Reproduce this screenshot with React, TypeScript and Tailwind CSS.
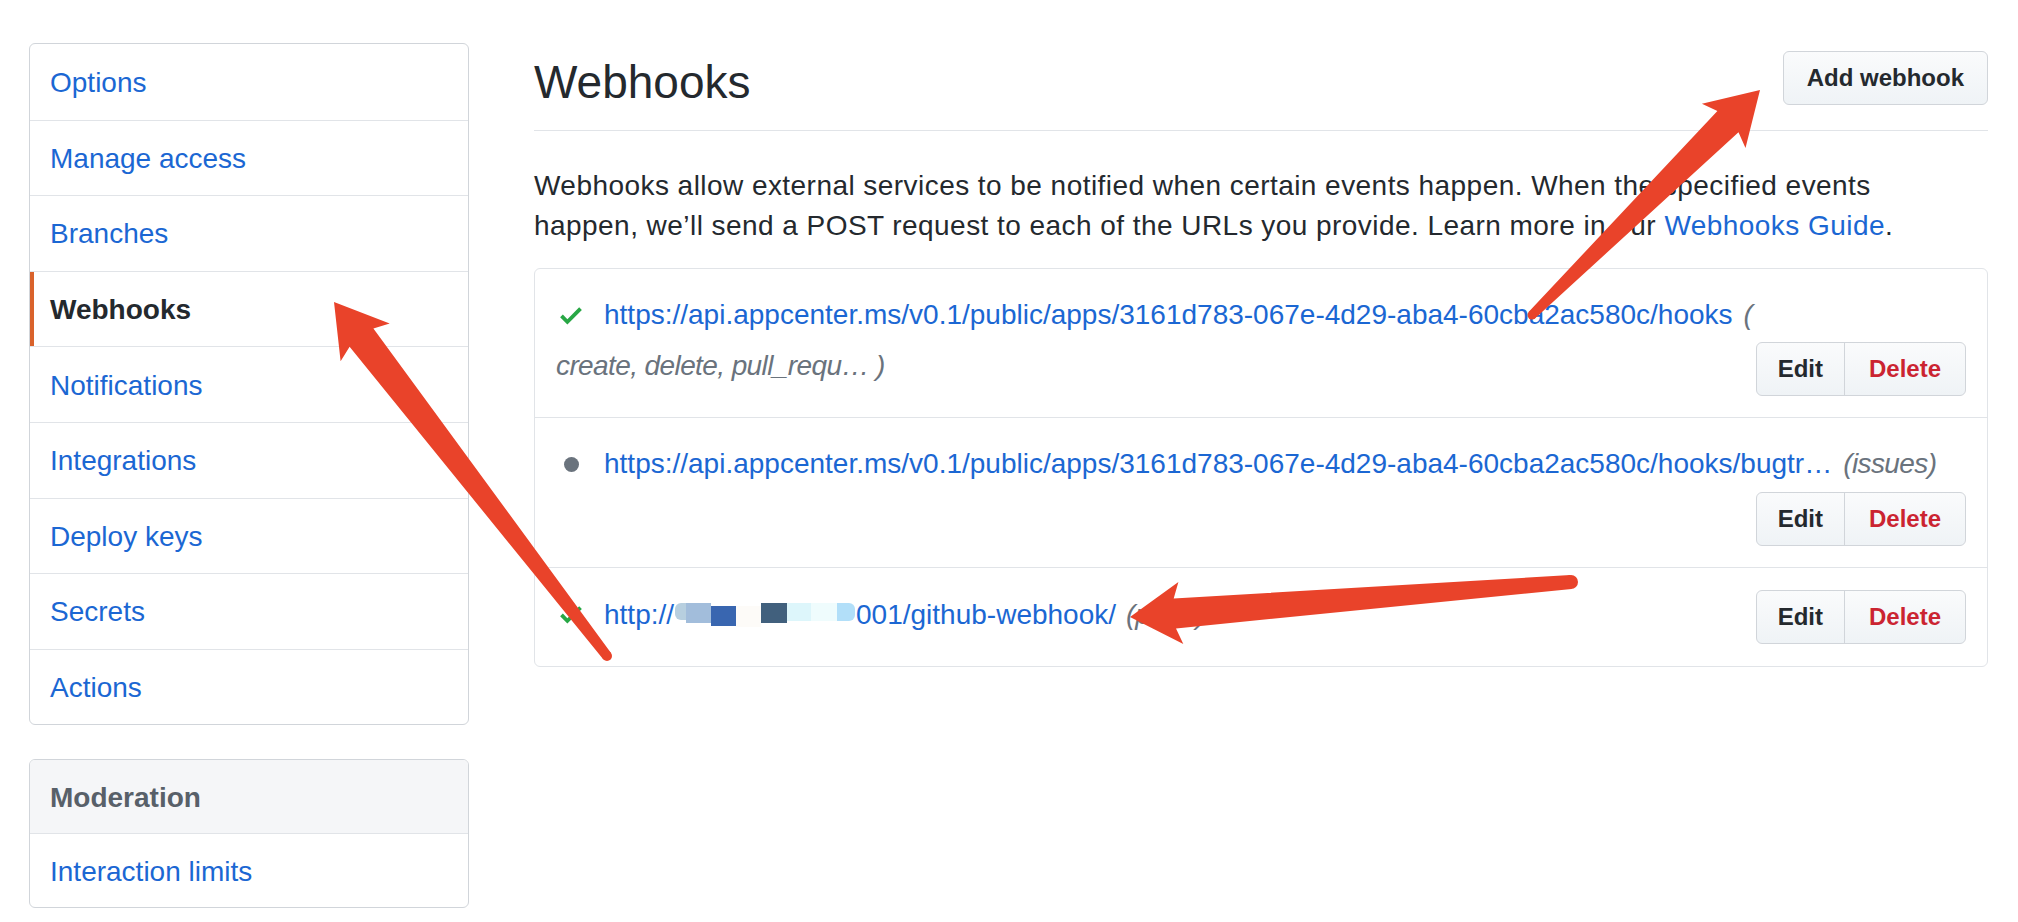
import React from 'react';

const sideItems = [
  'Options',
  'Manage access',
  'Branches',
  'Webhooks',
  'Notifications',
  'Integrations',
  'Deploy keys',
  'Secrets',
  'Actions',
];

function CheckIcon() {
  return (
    <svg width="22" height="29" viewBox="0 0 12 16" className="fill-[#28a745]">
      <path fillRule="evenodd" d="M12 5l-8 8-4-4 1.5-1.5L4 10l6.5-6.5L12 5z" />
    </svg>
  );
}

function DotIcon() {
  return (
    <svg width="15" height="15" viewBox="0 0 8 8" className="fill-[#6a737d]">
      <circle cx="4" cy="4" r="4" />
    </svg>
  );
}

function EditDelete() {
  return (
    <div className="flex h-[54px] shrink-0 overflow-hidden rounded-[6px] border border-[#d1d5da] bg-linear-to-b from-[#fafbfc] to-[#eff3f6] text-[24px] font-bold">
      <button className="border-r border-[#d1d5da] px-[21px] text-[#24292e]">Edit</button>
      <button className="px-[24px] text-[#cb2431]">Delete</button>
    </div>
  );
}

// pixelated mask over the host part of the third url
const maskBlocks = [
  { w: 'w-[11px]', c: 'bg-[#b7cfdf]', o: 'mt-[0px] h-[17px] rounded-l-[6px]' },
  { w: 'w-[25px]', c: 'bg-[#a2bddb]', o: 'mt-[0px] h-[20px]' },
  { w: 'w-[25px]', c: 'bg-[#3966b0]', o: 'mt-[3px] h-[20px]' },
  { w: 'w-[25px]', c: 'bg-[#fdfbf8]', o: 'mt-[3px] h-[21px]' },
  { w: 'w-[26px]', c: 'bg-[#41607d]', o: 'mt-[0px] h-[20px]' },
  { w: 'w-[24px]', c: 'bg-[#ddf6fb]', o: 'mt-[0px] h-[18px]' },
  { w: 'w-[26px]', c: 'bg-[#effcfd]', o: 'mt-[0px] h-[18px]' },
  { w: 'w-[18px]', c: 'bg-[#b2dff9]', o: 'mt-[0px] h-[18px] rounded-r-[6px]' },
];

type Pt = [number, number];

function arrowShape(tip: Pt, tail: Pt, tw: number) {
  const L = 51;
  const W = 31;
  const N = 45;
  const nw = 15;
  const dx = tip[0] - tail[0];
  const dy = tip[1] - tail[1];
  const len = Math.hypot(dx, dy);
  const ux = dx / len;
  const uy = dy / len;
  const nx = -uy;
  const ny = ux;
  const p = (back: number, side: number) =>
    `${(tip[0] - ux * back + nx * side).toFixed(1)},${(tip[1] - uy * back + ny * side).toFixed(1)}`;
  const points = [
    p(0, 0),
    p(L, W),
    p(N, nw),
    p(len, tw),
    p(len, -tw),
    p(N, -nw),
    p(L, -W),
  ].join(' ');
  return { points, cx: tail[0], cy: tail[1], r: tw };
}

const arrows = [
  arrowShape([334, 302], [607, 656], 5),
  arrowShape([1130, 617], [1571, 582], 7),
  arrowShape([1760, 90], [1532, 315], 4.5),
];

function Arrows() {
  return (
    <svg className="pointer-events-none absolute left-0 top-0" width="2018" height="922">
      {arrows.map((a, i) => (
        <g key={i} fill="#e9432a">
          <polygon points={a.points} />
          <circle cx={a.cx} cy={a.cy} r={a.r} />
        </g>
      ))}
    </svg>
  );
}

export default function App() {
  return (
    <div className="relative min-h-[922px] bg-white font-['Liberation_Sans',Arial,sans-serif] text-[#24292e]">
      <div className="flex pl-[29px] pr-[30px] pt-[43px]">
        {/* Settings menu */}
        <aside className="w-[440px] shrink-0">
          <nav className="overflow-hidden rounded-[6px] border border-[#d1d5da]">
            {sideItems.map((s, i) => (
              <div
                key={s}
                className={`relative flex h-[75.6px] items-center pl-[20px] pt-[2px] text-[28px] ${
                  i > 0 ? 'border-t border-[#e1e4e8]' : ''
                } ${s === 'Webhooks' ? 'font-bold text-[#24292e]' : 'text-[#1b67d3]'}`}
              >
                {s === 'Webhooks' && <span className="absolute bottom-0 left-0 top-0 w-[4px] bg-[#d9622b]" />}
                {s}
              </div>
            ))}
          </nav>

          <nav className="mt-[34px] overflow-hidden rounded-[6px] border border-[#d1d5da]">
            <div className="flex h-[73px] items-center bg-[#f5f6f8] pl-[20px] pt-[2px] text-[28px] font-bold text-[#586069]">
              Moderation
            </div>
            <div className="flex h-[74px] items-center border-t border-[#e1e4e8] pl-[20px] pt-[2px] text-[28px] text-[#1b67d3]">
              Interaction limits
            </div>
          </nav>
        </aside>

        {/* Webhooks */}
        <main className="ml-[65px] flex-1">
          <div className="flex items-start justify-between border-b border-[#e1e4e8] pb-[25px] pt-[8px]">
            <h2 className="mt-[8px] text-[46px] leading-[46px]">Webhooks</h2>
            <button className="h-[54px] rounded-[6px] border border-[#d1d5da] bg-linear-to-b from-[#fafbfc] to-[#eff3f6] px-[23px] text-[24px] font-bold">
              Add webhook
            </button>
          </div>

          <p className="mt-[35px] text-[28px] leading-[40px] tracking-[0.45px]">
            Webhooks allow external services to be notified when certain events happen. When the specified events
            <br />
            happen, we’ll send a POST request to each of the URLs you provide. Learn more in our{' '}
            <a className="text-[#1b67d3]">Webhooks Guide</a>.
          </p>

          <div className="mt-[22px] rounded-[6px] border border-[#e1e4e8] text-[28px]">
            {/* hook 1 */}
            <div className="px-[21px] pb-[21px] pt-[25px]">
              <div className="flex h-[42px] items-center">
                <span className="mr-[18px] flex w-[30px] justify-center">
                  <CheckIcon />
                </span>
                <a className="text-[#1b67d3]">
                  https://api.appcenter.ms/v0.1/public/apps/3161d783-067e-4d29-aba4-60cba2ac580c/hooks
                </a>
                <span className="ml-[11px] italic text-[#6a737d]">(</span>
              </div>
              <div className="mt-[6px] flex items-start justify-between">
                <span className="mt-[3px] leading-[42px] tracking-[-0.6px] italic text-[#6a737d]">
                  create, delete, pull_requ… )
                </span>
                <EditDelete />
              </div>
            </div>

            {/* hook 2 */}
            <div className="border-t border-[#e1e4e8] px-[21px] pb-[21px] pt-[25px]">
              <div className="flex h-[42px] items-center">
                <span className="mr-[18px] flex w-[30px] justify-center">
                  <DotIcon />
                </span>
                <a className="text-[#1b67d3]">
                  https://api.appcenter.ms/v0.1/public/apps/3161d783-067e-4d29-aba4-60cba2ac580c/hooks/bugtr…
                </a>
                <span className="ml-[11px] tracking-[-0.6px] italic text-[#6a737d]">(issues)</span>
              </div>
              <div className="mt-[7px] flex justify-end">
                <EditDelete />
              </div>
            </div>

            {/* hook 3 */}
            <div className="flex items-center justify-between border-t border-[#e1e4e8] px-[21px] py-[22px]">
              <div className="-mt-[5px] flex h-[42px] items-center">
                <span className="mr-[18px] flex w-[30px] justify-center">
                  <CheckIcon />
                </span>
                <a className="flex items-center text-[#1b67d3]">
                  <span>http://</span>
                  <span className="mx-[1px] flex h-[24px] items-start">
                    {maskBlocks.map((b, i) => (
                      <span key={i} className={`block ${b.w} ${b.c} ${b.o}`} />
                    ))}
                  </span>
                  <span>001/github-webhook/</span>
                </a>
                <span className="ml-[10px] italic text-[#6a737d]">(push)</span>
              </div>
              <EditDelete />
            </div>
          </div>
        </main>
      </div>
      <Arrows />
    </div>
  );
}
